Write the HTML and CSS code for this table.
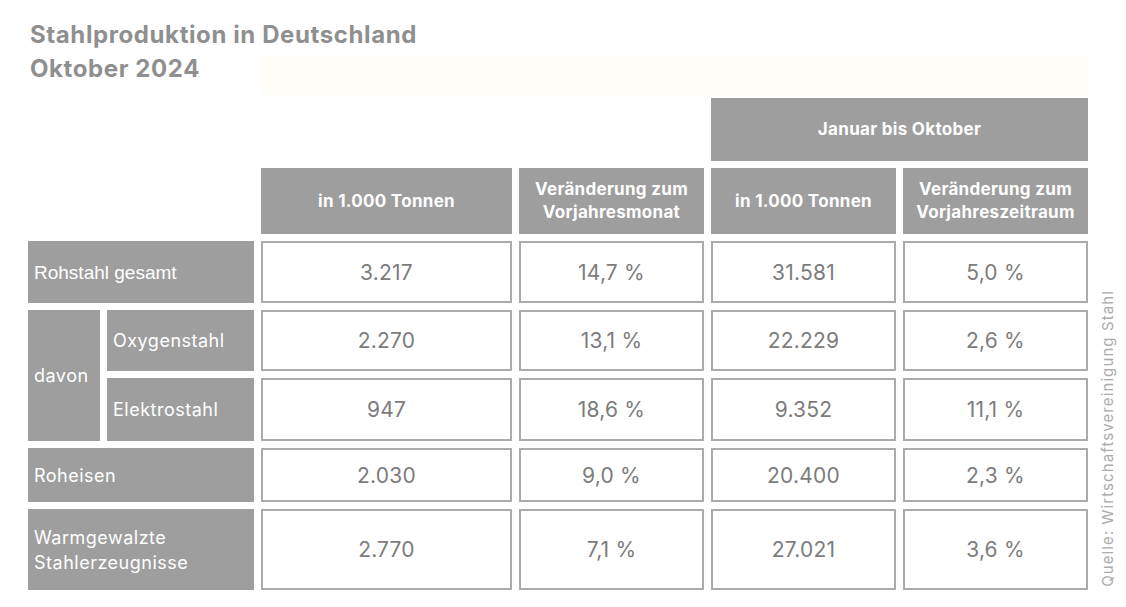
FILE: index.html
```html
<!DOCTYPE html>
<html lang="de">
<head>
<meta charset="utf-8">
<link rel="stylesheet" href="styles.css">
</head>
<body>
<div class="page">
  <h1 class="title">Stahlproduktion in Deutschland<br>Oktober 2024</h1>
  <div class="tint"></div>
  <div class="wrap">
    <div class="grid">
      <div class="blank top-blank"></div>
      <div class="hd span2">Januar bis Oktober</div>

      <div class="blank hd-blank"></div>
      <div class="hd">in 1.000 Tonnen</div>
      <div class="hd">Veränderung zum<br>Vorjahresmonat</div>
      <div class="hd">in 1.000 Tonnen</div>
      <div class="hd">Veränderung zum<br>Vorjahreszeitraum</div>

      <div class="lb wide arial">Rohstahl gesamt</div>
      <div class="val">3.217</div>
      <div class="val">14,7 %</div>
      <div class="val">31.581</div>
      <div class="val">5,0 %</div>

      <div class="lb davon">davon</div>
      <div class="lb">Oxygenstahl</div>
      <div class="val">2.270</div>
      <div class="val">13,1 %</div>
      <div class="val">22.229</div>
      <div class="val">2,6 %</div>

      <div class="lb">Elektrostahl</div>
      <div class="val">947</div>
      <div class="val">18,6 %</div>
      <div class="val">9.352</div>
      <div class="val">11,1 %</div>

      <div class="lb wide">Roheisen</div>
      <div class="val">2.030</div>
      <div class="val">9,0 %</div>
      <div class="val">20.400</div>
      <div class="val">2,3 %</div>

      <div class="lb wide">Warmgewalzte<br>Stahlerzeugnisse</div>
      <div class="val">2.770</div>
      <div class="val">7,1 %</div>
      <div class="val">27.021</div>
      <div class="val">3,6 %</div>
    </div>
    <div class="source">Quelle: Wirtschaftsvereinigung Stahl</div>
  </div>
</div>
</body>
</html>
```
FILE: styles.css
```css
html, body {
  margin: 0;
  padding: 0;
  background: #ffffff;
}
.page {
  width: 1126px;
  height: 607px;
  position: relative;
  font-family: "Inter", "Noto Sans", sans-serif;
}
.title {
  margin: 0;
  padding: 18px 0 0 30px;
  height: 68px;
  font-size: 24px;
  line-height: 34px;
  font-weight: 700;
  color: #8f8f8f;
  letter-spacing: 0.6px;
}
.tint {
  position: absolute;
  left: 260px;
  top: 55px;
  width: 828px;
  height: 40px;
  background: #fffdf8;
}
.wrap {
  display: flex;
  align-items: flex-end;
  gap: 11px;
  margin: 12px 0 0 28px;
}
.grid {
  display: grid;
  grid-template-columns: 72px 147px 251px 185px 185px 185px;
  grid-template-rows: 63px 66px 62px 61px 63px 54px 81px;
  gap: 7px;
  position: relative;
}
.top-blank { grid-column: 1 / 5; }
.hd-blank { grid-column: 1 / 3; }
.span2 { grid-column: 5 / 7; }
.hd {
  background: #9e9e9e;
  color: #ffffff;
  font-weight: 700;
  font-size: 17px;
  line-height: 23px;
  display: flex;
  align-items: center;
  justify-content: center;
  text-align: center;
  letter-spacing: 0.3px;
}
.lb {
  background: #9e9e9e;
  color: #ffffff;
  font-size: 18px;
  line-height: 25px;
  display: flex;
  align-items: center;
  padding-left: 6px;
  letter-spacing: 0.5px;
}
.arial {
  font-family: "Liberation Sans", Arial, sans-serif;
  font-size: 19px;
  letter-spacing: 0;
}
.wide { grid-column: 1 / 3; }
.davon {
  grid-row: span 2;
}
.val {
  border: 2px solid #ababab;
  color: #7c7c7c;
  font-size: 21px;
  display: flex;
  align-items: center;
  justify-content: center;
  letter-spacing: 0.2px;
}
.source {
  writing-mode: vertical-rl;
  transform: rotate(180deg);
  font-size: 15px;
  color: #ababab;
  letter-spacing: 1.1px;
  margin-bottom: 3px;
  line-height: 17px;
}
```
